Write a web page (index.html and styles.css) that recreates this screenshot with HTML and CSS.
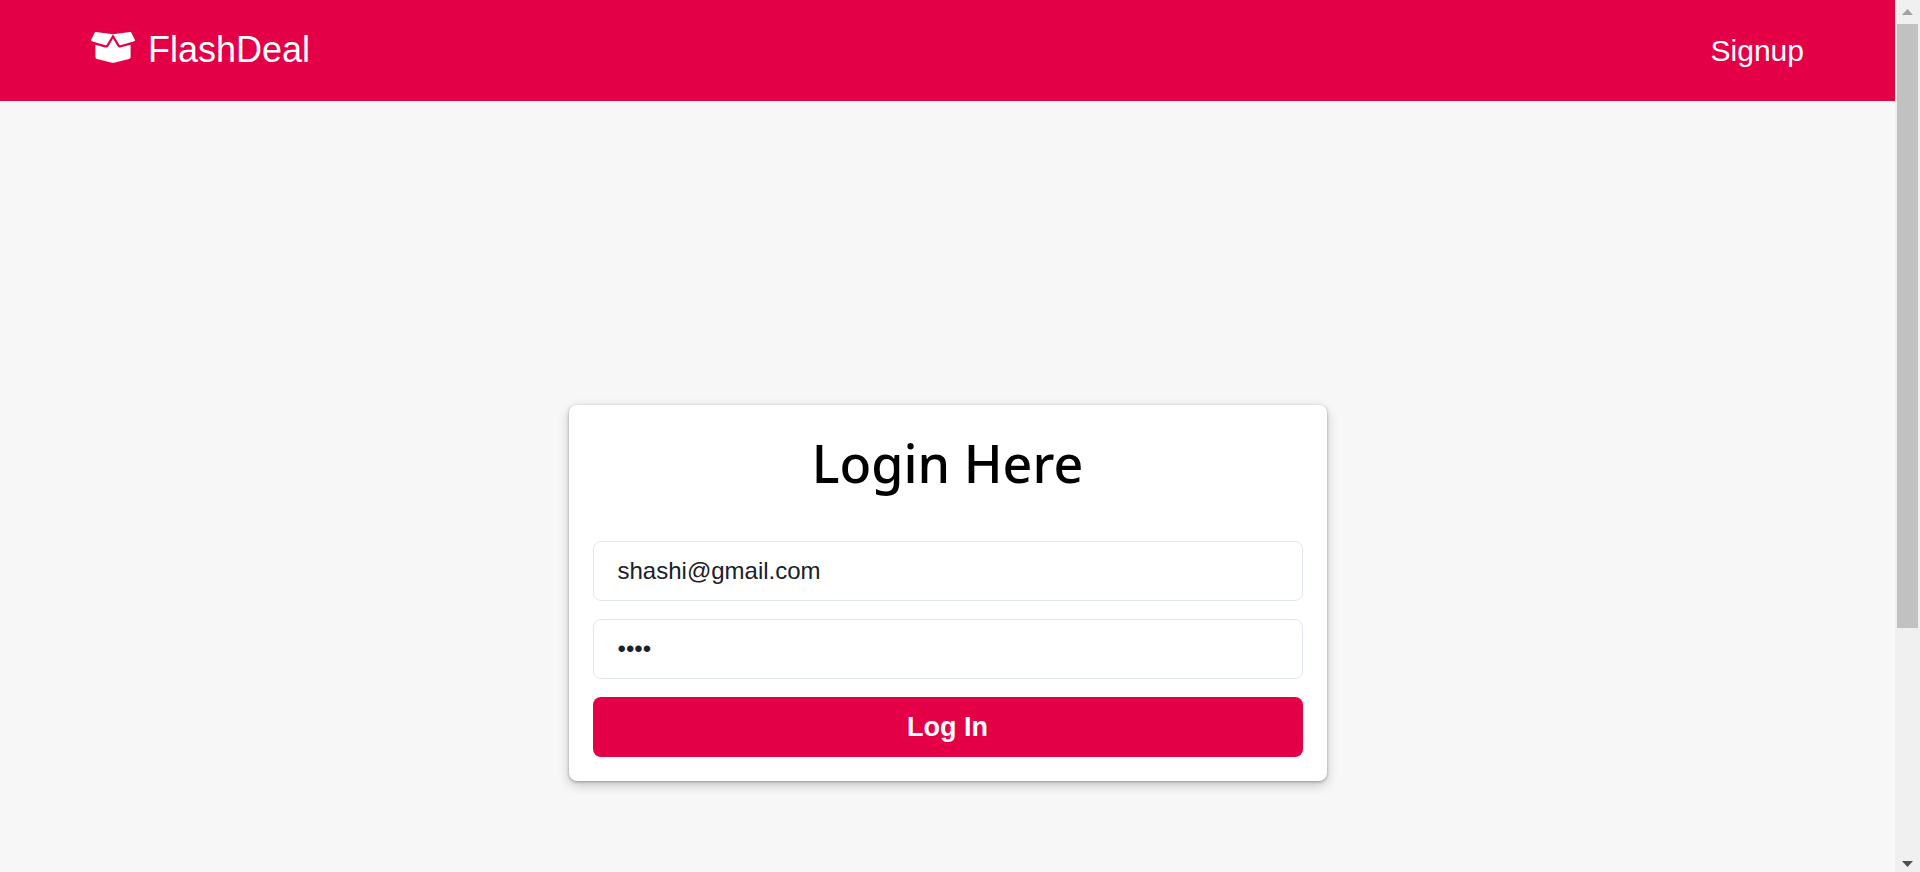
FILE: index.html
```html
<!DOCTYPE html>
<html lang="en">
<head>
<meta charset="utf-8">
<meta name="viewport" content="width=device-width, initial-scale=1">
<title>FlashDeal</title>
<link rel="stylesheet" href="styles.css">
</head>
<body>
<div class="page">
  <header class="navbar">
    <a class="brand" href="#">
      <svg class="brand-icon" viewBox="0 0 640 512" aria-hidden="true"><path fill="currentColor" d="M425.700 256c-16.900 0-32.800-9-41.400-23.400L320 126l-64.200 106.600c-8.700 14.500-24.600 23.500-41.500 23.500-4.500 0-9-.6-13.300-1.900L64 215v178c0 14.700 10 27.500 24.200 31l216.200 54.100c10.200 2.500 20.900 2.500 31 0L551.800 424c14.200-3.600 24.200-16.400 24.200-31V215l-137 39.100c-4.300 1.300-8.800 1.900-13.300 1.900zm212.600-112.200L586.800 41c-3.100-6.200-9.800-9.800-16.700-8.900L320 64l91.700 152.100c3.800 6.300 11.400 9.300 18.500 7.300l197.900-56.500c9.900-2.900 14.700-13.900 10.200-23.100zM53.200 41L1.700 143.800c-4.600 9.200.3 20.200 10.100 23l197.900 56.500c7.100 2 14.700-1 18.500-7.300L320 64 69.800 32.100c-6.900-.8-13.500 2.700-16.600 8.900z"/></svg>
      <span>FlashDeal</span>
    </a>
    <nav class="nav"><a class="nav-link" href="#">Signup</a></nav>
  </header>
  <main class="content">
    <form class="card">
      <h1 class="title">Login Here</h1>
      <input class="field" type="email" aria-label="Email" value="shashi@gmail.com">
      <input class="field" type="password" aria-label="Password" value="1234">
      <button class="submit" type="button">Log In</button>
    </form>
  </main>
</div>
<div class="scrollbar" aria-hidden="true">
  <svg class="arrow arrow-up" viewBox="0 0 11 6"><path d="M0 6 5.500 0 11 6z"/></svg>
  <div class="track"><div class="thumb"></div></div>
  <svg class="arrow arrow-down" viewBox="0 0 11 6"><path d="M0 0h11L5.500 6z"/></svg>
</div>
</body>
</html>
```

FILE: styles.css
```css
* {
  box-sizing: border-box;
}

body {
  margin: 0;
  height: 100vh;
  display: grid;
  grid-template-columns: 1fr 25px;
  background: #f7f7f7;
  font-family: "Liberation Sans", Arial, sans-serif;
}

.navbar {
  display: flex;
  align-items: center;
  justify-content: space-between;
  padding: 28px 91px 30px;
  background: #e40046;
  color: #fff;
}

.brand {
  display: flex;
  align-items: flex-start;
  gap: 13px;
  color: inherit;
  font-size: 36px;
  line-height: 41px;
  text-decoration: none;
}

.brand-icon {
  width: 44px;
  height: 37px;
}

.nav {
  padding-top: 2px;
}

.nav-link {
  display: block;
  color: inherit;
  font-size: 30px;
  line-height: 41px;
  text-decoration: none;
}

.content {
  padding-top: 304px;
}

.card {
  display: flex;
  flex-direction: column;
  gap: 18px;
  width: 40%;
  margin: 0 auto;
  padding: 24px;
  border-radius: 8px;
  background: #fff;
  box-shadow: 0 1px 3px rgba(0, 0, 0, 0.3), 0 4px 12px rgba(0, 0, 0, 0.2);
}

.title {
  margin: 0 0 26px;
  color: #000;
  font-family: "Segoe UI", "Noto Sans", sans-serif;
  font-size: 52px;
  font-weight: 500;
  line-height: 68px;
  text-align: center;
}

.field {
  width: 100%;
  height: 60px;
  padding: 0 24px;
  border: 1px solid #e2e8f0;
  border-radius: 8px;
  background: #fff;
  color: #1a202c;
  font: inherit;
  font-size: 24px;
}

.submit {
  height: 60px;
  border: 0;
  border-radius: 8px;
  background: #e40046;
  color: #fff;
  font: inherit;
  font-size: 27px;
  font-weight: 700;
}

.scrollbar {
  display: flex;
  flex-direction: column;
  align-items: center;
  padding: 9px 2px 5px;
  background: #f0f0f0;
}

.arrow {
  width: 11px;
  height: 6px;
  flex: none;
}

.arrow-up {
  fill: #a3a3a3;
}

.arrow-down {
  fill: #505050;
}

.track {
  flex: 1;
  width: 100%;
  padding: 9px 0;
}

.thumb {
  height: 73%;
  background: #c1c1c1;
}
```
